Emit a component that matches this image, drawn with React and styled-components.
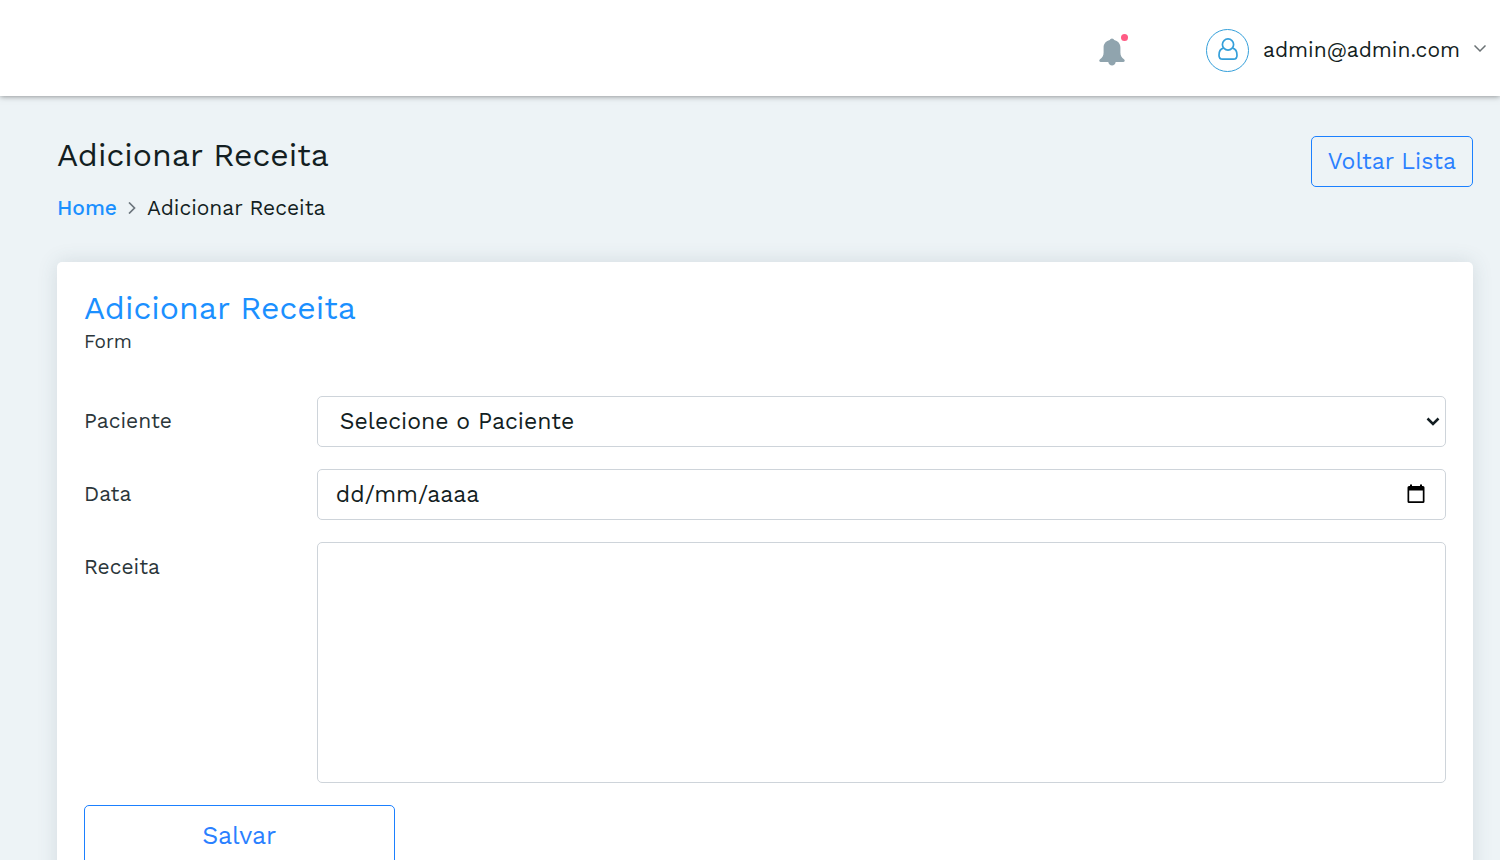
import React, { useState } from 'react'
import styled, { createGlobalStyle } from 'styled-components';

export default function App() {
    const [paciente, setPaciente] = useState('');
    const [data, setData] = useState('');
    const [receita, setReceita] = useState('');

  return (
    <>
      <GlobalStyle/>

      <Header>
        <BellButton type="button" aria-label="Notificações">
          <BellIcon/>
          <Badge/>
        </BellButton>
        <UserButton type="button">
          <Avatar><UserIcon/></Avatar>
          <span>admin@admin.com</span>
          <ChevronDown/>
        </UserButton>
      </Header>

      <Main>
        <PageHeader>
          <div>
            <PageTitle>Adicionar Receita</PageTitle>
            <Breadcrumb>
              <HomeLink href="#">Home</HomeLink>
              <ChevronRight/>
              <span>Adicionar Receita</span>
            </Breadcrumb>
          </div>
          <BackButton type="button">Voltar Lista</BackButton>
        </PageHeader>

        <Card onSubmit={(e)=>{e.preventDefault()}}>
          <CardTitle>Adicionar Receita</CardTitle>
          <CardSubtitle>Form</CardSubtitle>

          <FormRow>
            <Label htmlFor="paciente">Paciente</Label>
            <SelectCont>
              <Select id="paciente" value={paciente} onChange={(e)=>{setPaciente(e.target.value)}}>
                <option value="">Selecione o Paciente</option>
              </Select>
              <SelectArrow/>
            </SelectCont>
          </FormRow>

          <FormRow>
            <Label htmlFor="data">Data</Label>
            <DateCont>
              <DateInput id="data" type="text" placeholder="dd/mm/aaaa" value={data} onChange={(e)=>{setData(e.target.value)}}/>
              <CalendarButton type="button" aria-label="Abrir calendário"><CalendarIcon/></CalendarButton>
            </DateCont>
          </FormRow>

          <FormRow>
            <Label htmlFor="receita">Receita</Label>
            <TextArea id="receita" value={receita} onChange={(e)=>{setReceita(e.target.value)}}/>
          </FormRow>

          <SaveButton type="submit">Salvar</SaveButton>
        </Card>
      </Main>
    </>
  )
}

const BellIcon = ()=>(
  <svg width="26" height="28" viewBox="0 0 26 28" fill="#90a4ae">
    <path d="M13 0.5c-1.100 0-1.900.8-2.200 1.600C7.200 2.900 4.600 5.800 4.600 9.500v5c0 3.500-1.300 5-3.600 6.700C-.2 22.100.1 23.900 1.600 23.900h22.800c1.500 0 1.800-1.800.6-2.700-2.300-1.700-3.600-3.200-3.600-6.700v-5c0-3.700-2.600-6.600-6.200-7.400C14.900 1.300 14.100.5 13 .5z"/>
    <path d="M9.300 23.900c.3 2.100 1.800 3.600 3.700 3.600s3.400-1.500 3.700-3.600z"/>
  </svg>
)

const UserIcon = ()=>(
  <svg width="20" height="24" viewBox="0 0 20 24" fill="none" stroke="#349fda" strokeWidth="1.700">
    <circle cx="10" cy="6.500" r="5.600"/>
    <path d="M5.400 10.100C2.600 10.700 1 13.100 1 17.200c0 2.400 1.400 4 3.600 4h10.800c2.200 0 3.600-1.600 3.600-4 0-4.100-1.600-6.500-4.400-7.100"/>
  </svg>
)

const ChevronDown = ()=>(
  <svg width="12" height="10" viewBox="0 0 12 10" fill="none" stroke="#6b7275" strokeWidth="1.500">
    <path d="M0.500 0.500 6 6 11.500 0.500"/>
  </svg>
)

const ChevronRight = ()=>(
  <svg width="8" height="12" viewBox="0 0 8 12" fill="none" stroke="#6c757d" strokeWidth="1.700">
    <path d="M1 0.500 6.500 6 1 11.500"/>
  </svg>
)

const CalendarIcon = ()=>(
  <svg width="18" height="22" viewBox="0 0 18 22">
    <path fill="#000000" fillRule="evenodd" d="M3 0.500h2V2h8V0.500h2V2h1a1.500 1.500 0 0 1 1.500 1.500v14A1.500 1.500 0 0 1 16 19H2a1.500 1.500 0 0 1-1.500-1.500v-14A1.500 1.500 0 0 1 2 2h1zM2.200 6.500v10.800h13.600V6.500z"/>
  </svg>
)

const GlobalStyle = createGlobalStyle`
 *, *::before, *::after {
     box-sizing: border-box;
 }
 body {
     margin: 0;
     background-color: #edf3f6;
     color: #131e22;
     font-family: "Work Sans", Inter, sans-serif;
     font-size: 21px;
     font-weight: 400;
     line-height: 28px;
 }
 button, input, select, textarea {
     font: inherit;
     color: inherit;
 }
 svg {
     display: block;
     flex-shrink: 0;
 }
`

const Header = styled.header`
 position: relative;
 display: flex;
 align-items: center;
 justify-content: flex-end;
 gap: 81px;
 height: 96px;
 padding: 4px 14px 0px;
 background-color: #ffffff;
 box-shadow: 0px 0px 6px rgba(0, 0, 0, 0.5);
`
const BellButton = styled.button`
 position: relative;
 padding: 4px 0px 0px;
 border: none;
 background: none;
 cursor: pointer;
`
const Badge = styled.span`
 position: absolute;
 top: 0px;
 right: -3px;
 width: 7px;
 height: 7px;
 border-radius: 100%;
 background-color: #ff5b84;
`
const UserButton = styled.button`
 display: flex;
 align-items: center;
 gap: 14px;
 padding: 0px;
 border: none;
 background: none;
 cursor: pointer;
`
const Avatar = styled.span`
 display: flex;
 align-items: center;
 justify-content: center;
 width: 43px;
 height: 43px;
 border: 1px solid #349fda;
 border-radius: 100%;
`

const Main = styled.main`
 padding: 40px 27px 40px 57px;
`
const PageHeader = styled.div`
 display: flex;
 justify-content: space-between;
 align-items: flex-start;
 margin-bottom: 40px;
`
const PageTitle = styled.h1`
 margin: 0px 0px 20px;
 font-size: 32px;
 font-weight: 400;
 line-height: 38px;
`
const Breadcrumb = styled.nav`
 display: flex;
 align-items: center;
 gap: 11px;
`
const HomeLink = styled.a`
 color: #1b90ff;
 font-weight: 500;
 text-decoration: none;
`
const OutlineButton = styled.button`
 border: 1px solid #1b80ff;
 border-radius: 5px;
 background-color: transparent;
 color: #2a80ff;
 cursor: pointer;
`
const BackButton = styled(OutlineButton)`
 height: 51px;
 padding: 0px 16px;
 font-size: 23px;
`

const Card = styled.form`
 padding: 26px 27px 40px;
 border-radius: 5px;
 background-color: #ffffff;
 box-shadow: 0px 0px 20px rgba(60, 90, 100, 0.15);
`
const CardTitle = styled.h2`
 margin: 0px;
 color: #1b90ff;
 font-size: 32px;
 font-weight: 400;
 line-height: 40px;
`
const CardSubtitle = styled.p`
 margin: 0px 0px 40px;
 color: #2b363a;
 font-size: 19px;
`
const FormRow = styled.div`
 display: grid;
 grid-template-columns: 2fr 10fr;
 column-gap: 7px;
 margin-bottom: 22px;
`
const Label = styled.label`
 padding: 11px 0px;
 color: #2b363a;
`
const SelectCont = styled.div`
 display: grid;
 align-items: center;
 height: 51px;
`
const Select = styled.select`
 grid-area: 1 / 1;
 width: 100%;
 height: 100%;
 padding: 0px 22px;
 border: 1px solid #ced4da;
 border-radius: 5px;
 background-color: #ffffff;
 font-size: 23px;
 appearance: none;
`
const ArrowIcon = styled.svg`
 grid-area: 1 / 1;
 justify-self: end;
 margin-right: 6px;
 pointer-events: none;
`
const SelectArrow = ()=>(
  <ArrowIcon width="14" height="9" viewBox="0 0 14 9" fill="none" stroke="#131e22" strokeWidth="2.500">
    <path d="M1.500 1.500 7 7 12.500 1.500"/>
  </ArrowIcon>
)
const DateCont = styled.div`
 display: flex;
 align-items: center;
 height: 51px;
 padding: 0px 20px 0px 18px;
 border: 1px solid #ced4da;
 border-radius: 5px;
`
const DateInput = styled.input`
 flex: 1;
 min-width: 0px;
 padding: 0px;
 border: none;
 outline: none;
 background: none;
 font-size: 23px;
 &::placeholder{
     color: inherit;
     opacity: 1;
 }
`
const CalendarButton = styled.button`
 padding: 0px;
 border: none;
 background: none;
 cursor: pointer;
`
const TextArea = styled.textarea`
 display: block;
 width: 100%;
 height: 241px;
 padding: 10px 18px;
 border: 1px solid #ced4da;
 border-radius: 5px;
 font-size: 23px;
 resize: none;
`
const SaveButton = styled(OutlineButton)`
 width: calc(25% - 30px);
 height: 62px;
 font-size: 25px;
`
